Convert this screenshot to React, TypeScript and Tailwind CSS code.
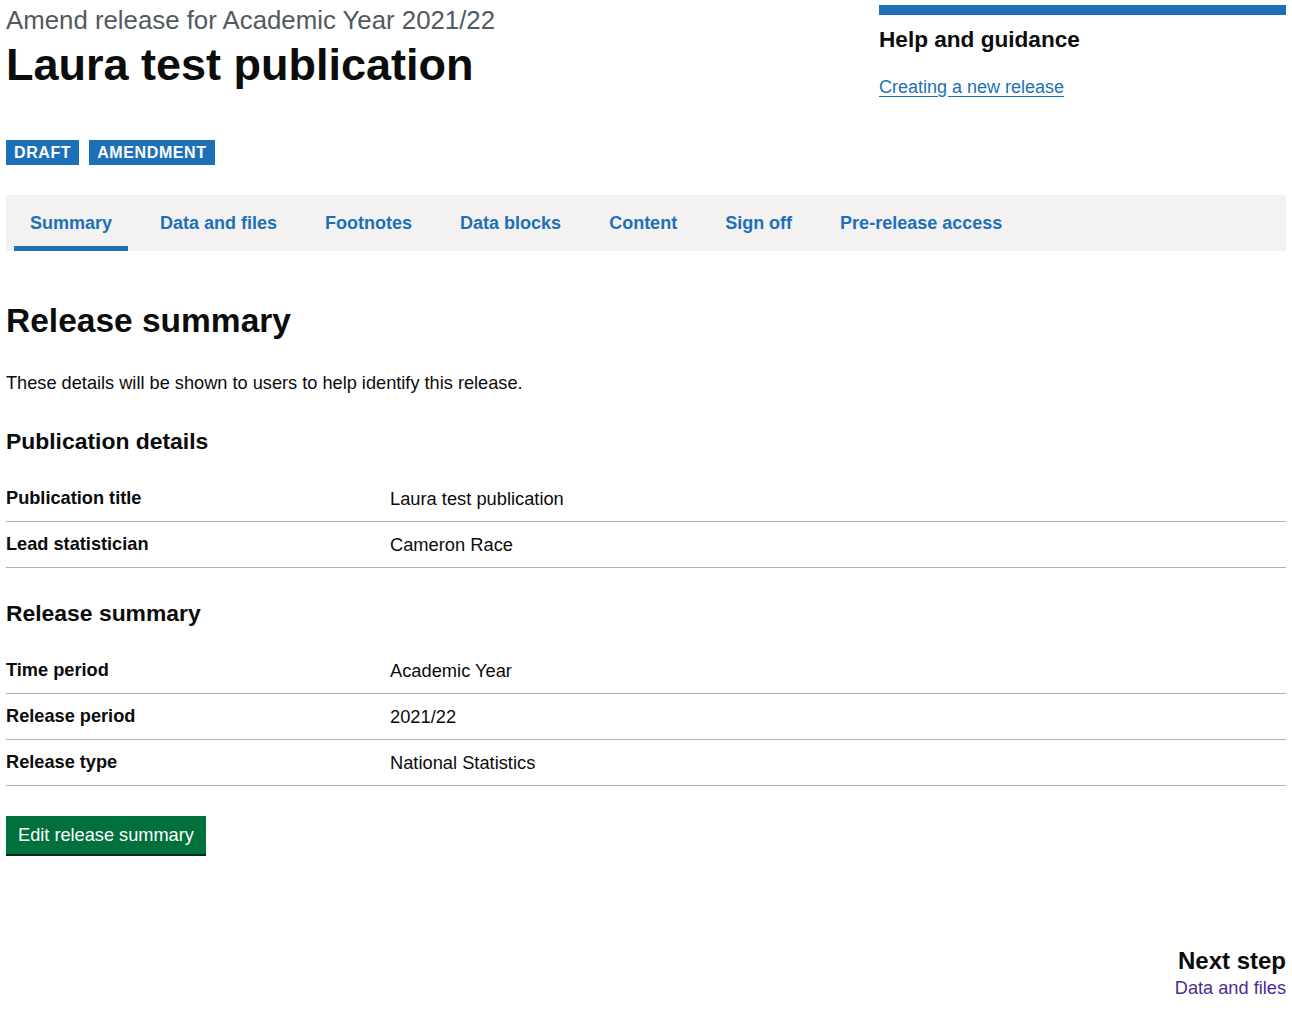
export default function App() {
  const tabs = ["Summary", "Data and files", "Footnotes", "Data blocks", "Content", "Sign off", "Pre-release access"];

  const publicationRows = [
    { key: "Publication title", value: "Laura test publication" },
    { key: "Lead statistician", value: "Cameron Race" },
  ];

  const summaryRows = [
    { key: "Time period", value: "Academic Year" },
    { key: "Release period", value: "2021/22" },
    { key: "Release type", value: "National Statistics" },
  ];

  const SummaryList = ({ rows }: { rows: { key: string; value: string }[] }) => (
    <dl className="mb-[30px]">
      {rows.map((row) => (
        <div key={row.key} className="flex border-b border-[#b1b4b6] pt-[10px] pb-[10px] leading-[25px]">
          <dt className="w-[30%] pr-[20px] font-bold text-[18.2px]">{row.key}</dt>
          <dd className="flex-1 text-[18.3px]">{row.value}</dd>
        </div>
      ))}
    </dl>
  );

  return (
    <div className="min-h-screen bg-white px-[6px] pt-[5px] text-[#0b0c0c] font-['Liberation_Sans',Arial,sans-serif]">
      {/* Header */}
      <div className="flex gap-[30px]">
        <div className="w-[843px]">
          <span className="block text-[25.8px] leading-[30px] text-[#505a5f] mb-[5px]">
            Amend release for Academic Year 2021/22
          </span>
          <h1 className="text-[45px] leading-[50px] font-bold">Laura test publication</h1>
          <div className="flex gap-[10px] mt-[50px]">
            <span className="bg-[#1d70b8] text-white text-[16px] font-bold tracking-[0.6px] uppercase px-[8px] pt-[4px] pb-[3px] leading-[18px]">
              Draft
            </span>
            <span className="bg-[#1d70b8] text-white text-[16px] font-bold tracking-[0.6px] uppercase px-[8px] pt-[4px] pb-[3px] leading-[18px]">
              Amendment
            </span>
          </div>
        </div>
        <aside className="flex-1 border-t-[10px] border-[#1d70b8] pt-[10px]">
          <h2 className="text-[22.6px] leading-[30px] font-bold mb-[20px]">Help and guidance</h2>
          <a href="#" className="text-[18px] leading-[25px] text-[#1d70b8] underline underline-offset-[3px]">
            Creating a new release
          </a>
        </aside>
      </div>

      {/* Tabs */}
      <nav className="mt-[30px] bg-[#f3f2f1] h-[56px] flex items-stretch pl-[8px]">
        {tabs.map((tab, i) => (
          <a
            key={tab}
            href="#"
            className={
              "flex items-center px-[16px] mr-[16px] pt-[5px] text-[18px] font-bold text-[#1d70b8] border-b-[5px] " +
              (i === 0 ? "border-[#1d70b8]" : "border-transparent")
            }
          >
            {tab}
          </a>
        ))}
      </nav>

      {/* Content */}
      <main className="pt-[50px]">
        <h2 className="text-[33.5px] leading-[40px] font-bold mb-[30px]">Release summary</h2>
        <p className="text-[18.2px] leading-[25px] mb-[30px]">
          These details will be shown to users to help identify this release.
        </p>

        <h3 className="text-[22.9px] leading-[30px] font-bold mb-[20px]">Publication details</h3>
        <SummaryList rows={publicationRows} />

        <h3 className="text-[22.9px] leading-[30px] font-bold mb-[20px]">Release summary</h3>
        <SummaryList rows={summaryRows} />

        <button className="bg-[#00703c] text-white text-[18.2px] leading-[25px] px-[12px] pt-[7px] pb-[6px] shadow-[0_2px_0_#002d18]">
          Edit release summary
        </button>

        <div className="mt-[92px] flex flex-col items-end">
          <h3 className="text-[24px] leading-[30px] font-bold">Next step</h3>
          <a href="#" className="text-[18.2px] leading-[25px] text-[#4c2c92]">
            Data and files
          </a>
        </div>
      </main>
    </div>
  );
}
